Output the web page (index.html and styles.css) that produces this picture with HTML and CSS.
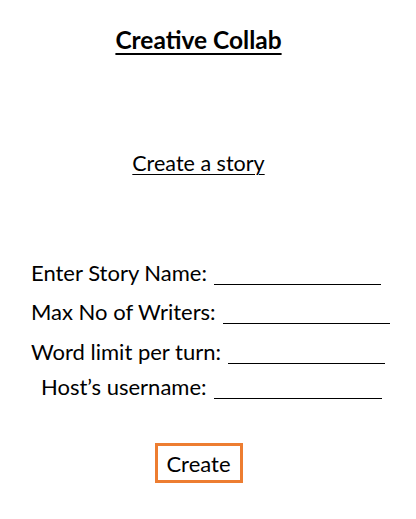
FILE: index.html
```html
<!DOCTYPE html>
<html>
<head>
<meta charset="utf-8">
<link rel="stylesheet" href="styles.css">
</head>
<body>
<main class="page">
  <h1 class="title">Creative Collab</h1>
  <h2 class="subtitle">Create a story</h2>
  <form class="form">
    <div class="row row1"><span class="label">Enter Story Name:</span><span class="blank b1"></span></div>
    <div class="row row2"><span class="label">Max No of Writers:</span><span class="blank b2"></span></div>
    <div class="row row3"><span class="label">Word limit per turn:</span><span class="blank b3"></span></div>
    <div class="row row4"><span class="label">Host’s username:</span><span class="blank b4"></span></div>
  </form>
  <div class="actions"><button class="create" type="button">Create</button></div>
</main>
</body>
</html>
```
FILE: styles.css
```css
html, body {
  margin: 0;
  padding: 0;
  background: #ffffff;
}
.page {
  width: 397px;
  font-family: Lato, "Open Sans", sans-serif;
  color: #000;
  display: flex;
  flex-direction: column;
}
.title {
  margin: 26px 0 0;
  font-size: 24.5px;
  font-weight: 700;
  line-height: 28px;
  text-align: center;
  text-decoration: underline;
  text-decoration-thickness: 2px;
  text-underline-offset: 4px;
}
.subtitle {
  margin: 97px 0 0;
  font-size: 21.5px;
  font-weight: 400;
  line-height: 24px;
  text-align: center;
  text-decoration: underline;
  text-decoration-thickness: 1px;
  text-underline-offset: 3px;
}
.form {
  margin: 86px 0 0;
  padding-left: 31px;
  display: flex;
  flex-direction: column;
}
.row {
  display: flex;
  align-items: flex-end;
  gap: 7px;
  font-size: 22px;
  line-height: 24px;
  height: 24px;
}
.row2 { margin-top: 15px; }
.row3 { margin-top: 16px; }
.row4 { margin-top: 11px; margin-left: 10px; }
.blank {
  display: inline-block;
  flex-shrink: 0;
  border-bottom: 1px solid #000;
  height: 0;
  margin-bottom: 0;
}
.b1 { width: 167px; }
.b2 { width: 167px; }
.b3 { width: 157px; }
.b4 { width: 168px; }
.actions {
  margin-top: 44px;
  display: flex;
  justify-content: center;
}
.create {
  font-family: Lato, "Open Sans", sans-serif;
  font-size: 22px;
  line-height: 24px;
  color: #000;
  background: #fff;
  border: 3px solid #ed7d31;
  border-radius: 0;
  padding: 6px 8px;
  width: 88px;
  height: 40px;
}
```
